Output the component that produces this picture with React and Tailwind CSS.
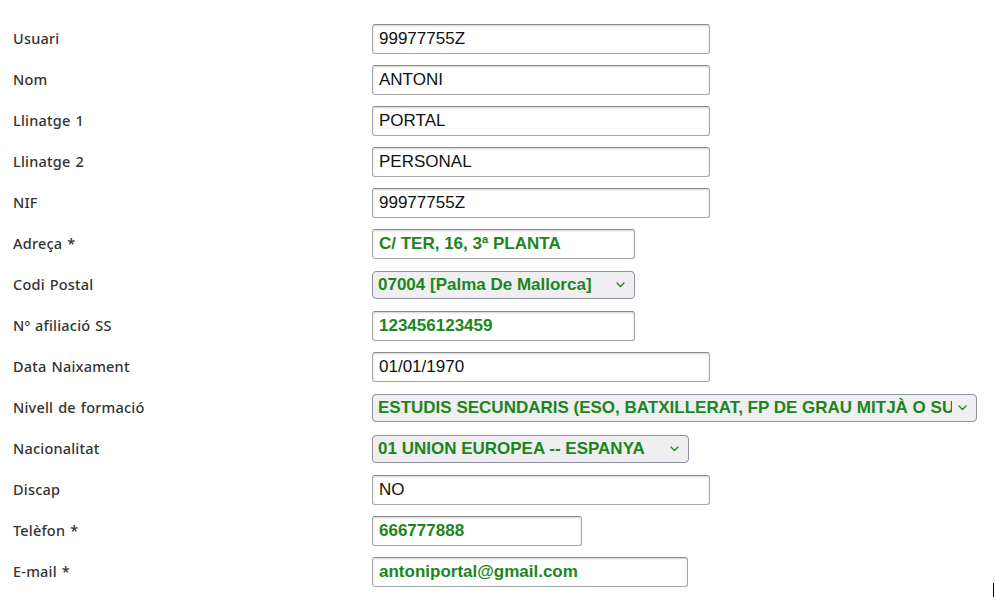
const ROWS = [
  { label: 'Usuari', value: '99977755Z', kind: 'text', w: 'w-[338px]' },
  { label: 'Nom', value: 'ANTONI', kind: 'text', w: 'w-[338px]' },
  { label: 'Llinatge 1', value: 'PORTAL', kind: 'text', w: 'w-[338px]' },
  { label: 'Llinatge 2', value: 'PERSONAL', kind: 'text', w: 'w-[338px]' },
  { label: 'NIF', value: '99977755Z', kind: 'text', w: 'w-[338px]' },
  { label: 'Adreça *', value: 'C/ TER, 16, 3ª PLANTA', kind: 'edit', w: 'w-[263px]' },
  { label: 'Codi Postal', value: '07004 [Palma De Mallorca]', kind: 'select', w: 'w-[263px]' },
  { label: 'Nº afiliació SS', value: '123456123459', kind: 'edit', w: 'w-[263px]' },
  { label: 'Data Naixament', value: '01/01/1970', kind: 'text', w: 'w-[338px]' },
  { label: 'Nivell de formació', value: 'ESTUDIS SECUNDARIS (ESO, BATXILLERAT, FP DE GRAU MITJÀ O SUPERIOR)', kind: 'select', w: 'w-[605px]' },
  { label: 'Nacionalitat', value: '01 UNION EUROPEA -- ESPANYA', kind: 'select', w: 'w-[317px]' },
  { label: 'Discap', value: 'NO', kind: 'text', w: 'w-[338px]' },
  { label: 'Telèfon *', value: '666777888', kind: 'edit', w: 'w-[210px]' },
  { label: 'E-mail *', value: 'antoniportal@gmail.com', kind: 'edit', w: 'w-[316px]' },
];

function Chevron() {
  return (
    <svg className="w-[9px] h-[6px] flex-shrink-0" viewBox="0 0 9 6" fill="none">
      <path d="M1 1l3.5 3.5L8 1" stroke="#1c851c" strokeWidth="1.3" strokeLinecap="round" strokeLinejoin="round" />
    </svg>
  );
}

function Field({ row }) {
  if (row.kind === 'select') {
    return (
      <div className={`${row.w} h-[28px] flex items-center gap-[6px] pl-[5px] pr-[9px] rounded-[4px] border border-[#8f8f9d] bg-[#efeff1] text-[#1c851c] font-bold text-[17px]`}>
        <span className="flex-1 min-w-0 overflow-hidden whitespace-nowrap">{row.value}</span>
        <Chevron />
      </div>
    );
  }
  const green = row.kind === 'edit';
  return (
    <div className={`${row.w} h-[30px] flex items-center pl-[6px] rounded-[3px] border border-[#a8a8a8] border-t-[#8a8a8a] bg-white shadow-[inset_0_1px_2px_rgba(0,0,0,0.18)] text-[17px] whitespace-nowrap overflow-hidden ${green ? 'text-[#1c851c] font-bold' : 'text-[#111]'}`}>
      {row.value}
    </div>
  );
}

export default function App() {
  return (
    <div className="relative w-[995px] h-[606px] bg-white overflow-hidden font-['Liberation_Sans',Arial,sans-serif]">
      <div className="pt-[18px] flex flex-col">
        {ROWS.map((row, i) => (
          <div key={i} className="h-[41px] flex items-center">
            <div className="w-[372px] pl-[13px] text-[14.5px] tracking-[0.2px] [word-spacing:1px] text-[#333] font-medium font-['Noto_Sans',sans-serif]">{row.label}</div>
            <Field row={row} />
          </div>
        ))}
      </div>
      {/* caret remnant at bottom right */}
      <div className="absolute left-[993px] top-[583px] w-px h-[14px] bg-black" />
    </div>
  );
}
